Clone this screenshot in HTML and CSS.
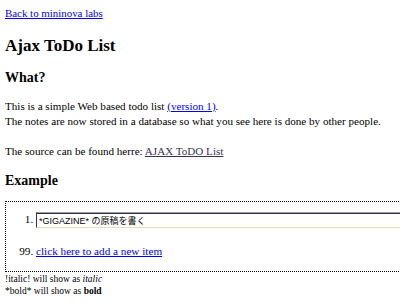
FILE: index.html
```html
<!DOCTYPE html>
<html lang="en">
<head>
    <meta charset="UTF-8">
    <title>Ajax ToDo List</title>
    <link rel="stylesheet" href="styles.css">
</head>
<body>
    <a href="#" class="back">Back to mininova labs</a>

    <h1>Ajax ToDo List</h1>

    <h2>What?</h2>
    <p>This is a simple Web based todo list <a href="#">(version 1)</a>.<br>
    The notes are now stored in a database so what you see here is done by other people.</p>

    <p class="source">The source can be found herre: <a href="#" class="visited">AJAX ToDO List</a></p>

    <h2 class="example">Example</h2>

    <div class="todo">
        <ol class="items">
            <li><input type="text" class="edit" value="*GIGAZINE* の原稿を書く"></li>
            <li value="99"><a href="#">click here to add a new item</a></li>
        </ol>
    </div>

    <div class="help">
        <div>!italic! will show as <i>italic</i></div>
        <div>*bold* will show as <b>bold</b></div>
    </div>
</body>
</html>
```

FILE: styles.css
```css
html {
    overflow: hidden;
}

body {
    margin: 6px 5px;
    font-family: "Liberation Serif", "Times New Roman", serif;
    font-size: 11.1px;
    line-height: 15px;
    color: #000;
    background: #fff;
    width: 440px;
}

a {
    color: #0000ee;
}

a.visited {
    color: #3c3050;
}

.back {
    display: inline-block;
    font-size: 10.9px;
}

h1 {
    font-size: 17px;
    line-height: 20px;
    margin: 15px 0 13px;
}

h2 {
    font-size: 14px;
    line-height: 17px;
    margin: 0 0 13px;
}

p {
    margin: 0;
}

.source {
    margin-top: 15px;
}

h2.example {
    margin: 13px 0 12px;
}

.todo {
    border: 1px dotted #000;
    padding: 10px 0 11px;
}

.items {
    margin: 0;
    padding-left: 30px;
    font-size: 11.2px;
}

.items li {
    height: 16px;
}

.items li + li {
    margin-top: 16px;
}

.edit {
    width: 420px;
    height: 16px;
    box-sizing: border-box;
    margin: 0;
    padding: 0 2px;
    vertical-align: top;
    font-family: "Liberation Sans", "Noto Sans CJK JP", sans-serif;
    font-size: 9px;
    color: #000;
    border: 1px solid #3a3646;
    border-top-color: #9c9ca4;
    border-bottom-color: #f0d8b8;
    border-right: none;
    box-shadow: inset 0 1px 0 #2e2b3c;
    outline: none;
}

.help {
    font-size: 9.5px;
    line-height: 12px;
    margin-top: 1px;
}
```
